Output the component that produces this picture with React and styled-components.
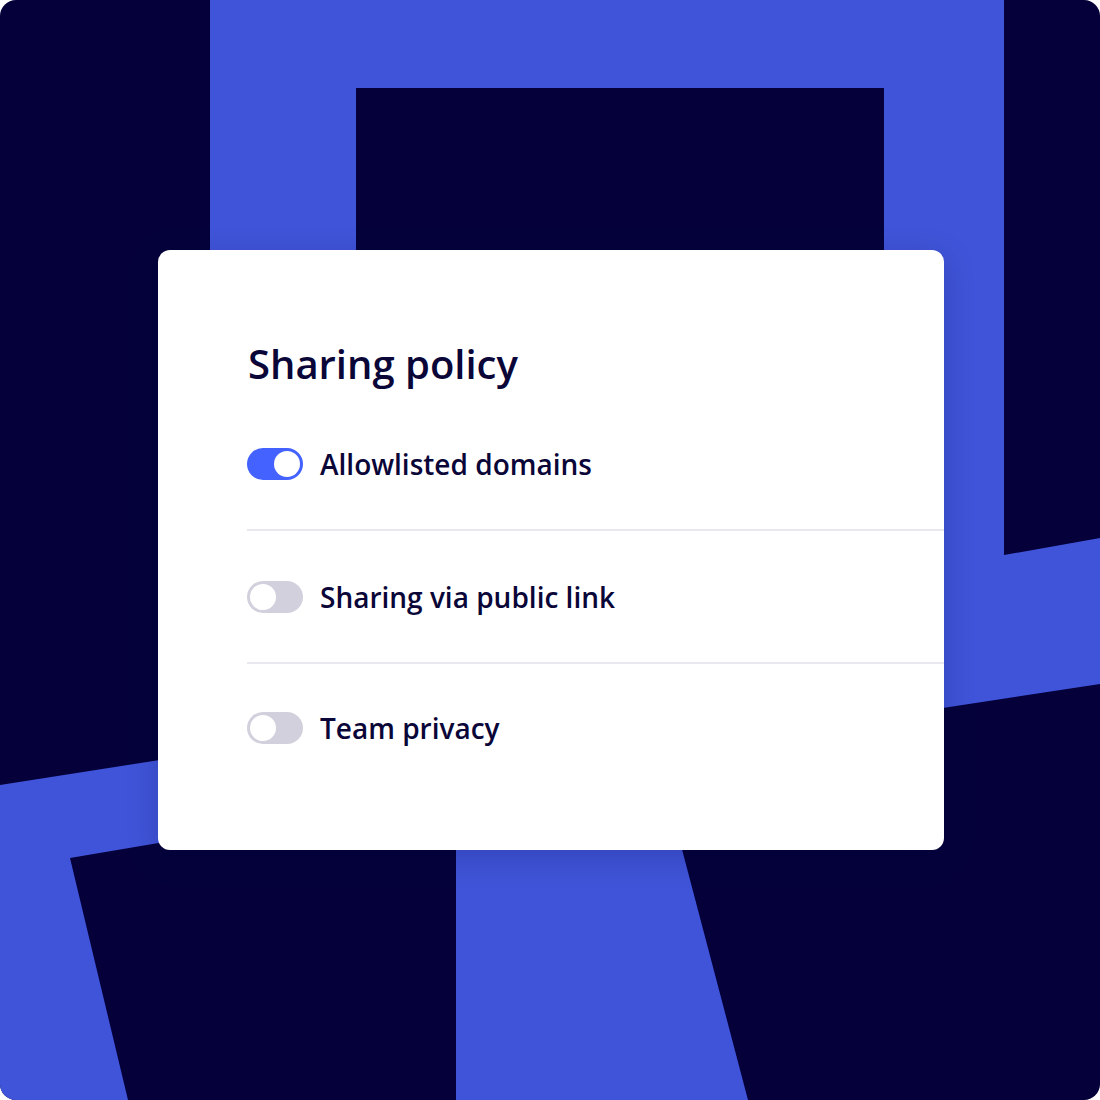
import React, { useState } from "react";
import styled, { createGlobalStyle } from "styled-components";

const GlobalStyle = createGlobalStyle`
  html, body {
    margin: 0;
    padding: 0;
    background: #ffffff;
  }
  body {
    font-family: "Open Sans", "Noto Sans", sans-serif;
  }
`;

const Canvas = styled.div`
  position: relative;
  width: 1100px;
  height: 1100px;
  border-radius: 16px;
  overflow: hidden;
  background: #05003a;
`;

const Backdrop = styled.svg`
  position: absolute;
  inset: 0;
  display: block;
`;

const Stage = styled.div`
  position: relative;
  height: 100%;
  display: flex;
  flex-direction: column;
  padding: 250px 0 0 158px;
  box-sizing: border-box;
`;

const Card = styled.section`
  width: 786px;
  height: 600px;
  box-sizing: border-box;
  background: #ffffff;
  border-radius: 12px;
  box-shadow: 0 8px 32px rgba(5, 0, 58, 0.18);
  padding: 90px 0 0 89px;
`;

const Title = styled.h2`
  margin: 0 0 60px 1px;
  font-size: 40px;
  line-height: 48px;
  font-weight: 600;
  color: #0a0638;
`;

const List = styled.ul`
  list-style: none;
  margin: 0;
  padding: 0;
`;

const Row = styled.li`
  display: flex;
  align-items: center;
  gap: 17px;
  padding: ${(p) => (p.$last ? "48px 0 0" : "50px 0 49px")};
  border-bottom: ${(p) => (p.$last ? "none" : "2px solid #e9e8ef")};

  &:first-child {
    padding-top: 0;
  }
`;

const Track = styled.button`
  position: relative;
  flex: none;
  width: 56px;
  height: 32px;
  padding: 0;
  border: none;
  border-radius: 16px;
  background: ${(p) => (p.$on ? "#4462ff" : "#d1d0dc")};
  cursor: pointer;
`;

const Knob = styled.span`
  position: absolute;
  top: 3px;
  left: ${(p) => (p.$on ? "27px" : "3px")};
  width: 26px;
  height: 26px;
  border-radius: 50%;
  background: #ffffff;
`;

const Label = styled.span`
  font-size: 28px;
  line-height: 32px;
  font-weight: 600;
  color: #0a0638;
`;

const settings = [
  { id: "allowlist", label: "Allowlisted domains", on: true },
  { id: "public", label: "Sharing via public link", on: false },
  { id: "team", label: "Team privacy", on: false },
];

const Shapes = () => (
  <Backdrop width="1100" height="1100" viewBox="0 0 1100 1100">
    <g fill="#3f54d8">
      <polygon points="210,0 1004,0 1004,88 356,88 356,800 210,800" />
      <polygon points="884,0 1004,0 1004,555 1100,538 1100,684 884,717" />
      <polygon points="0,785 300,738 300,819 70,858 128,1100 0,1100" />
      <polygon points="456,800 669,800 748,1100 456,1100" />
    </g>
  </Backdrop>
);

export default function App() {
  const [items, setItems] = useState(settings);

  const toggle = (id) =>
    setItems((list) =>
      list.map((it) => (it.id === id ? { ...it, on: !it.on } : it))
    );

  return (
    <>
      <GlobalStyle />
      <Canvas>
        <Shapes />
        <Stage>
          <Card>
            <Title>Sharing policy</Title>
            <List>
              {items.map((it, i) => (
                <Row key={it.id} $last={i === items.length - 1}>
                  <Track $on={it.on} onClick={() => toggle(it.id)} aria-pressed={it.on}>
                    <Knob $on={it.on} />
                  </Track>
                  <Label>{it.label}</Label>
                </Row>
              ))}
            </List>
          </Card>
        </Stage>
      </Canvas>
    </>
  );
}
